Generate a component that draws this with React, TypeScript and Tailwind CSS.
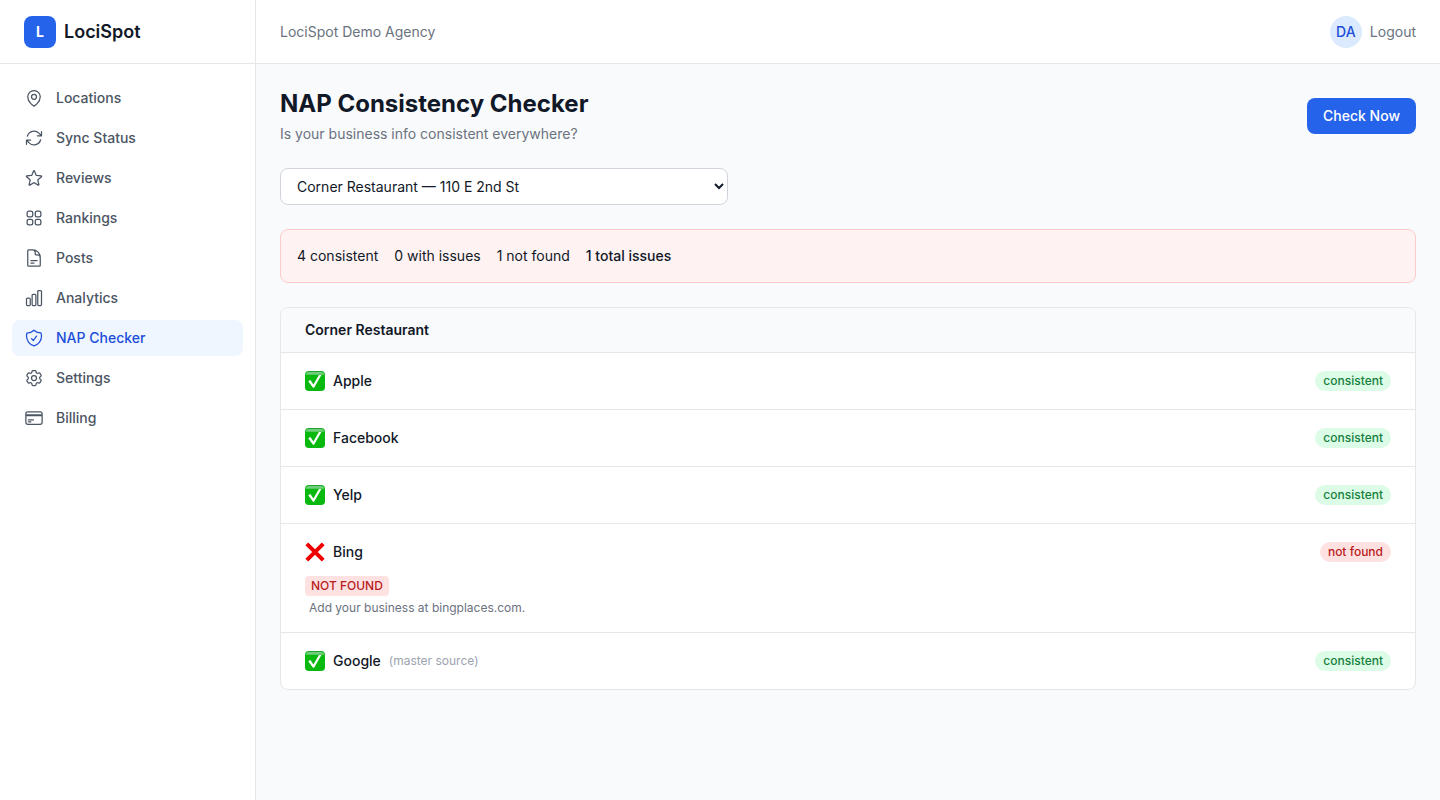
import { useState } from "react";
import type { IconType } from "react-icons";
import {
  HiOutlineArrowPath,
  HiOutlineChartBar,
  HiOutlineCog6Tooth,
  HiOutlineCreditCard,
  HiOutlineDocumentText,
  HiOutlineMapPin,
  HiOutlineShieldCheck,
  HiOutlineSquares2X2,
  HiOutlineStar,
} from "react-icons/hi2";

const navItems: { label: string; icon: IconType; active?: boolean }[] = [
  { label: "Locations", icon: HiOutlineMapPin },
  { label: "Sync Status", icon: HiOutlineArrowPath },
  { label: "Reviews", icon: HiOutlineStar },
  { label: "Rankings", icon: HiOutlineSquares2X2 },
  { label: "Posts", icon: HiOutlineDocumentText },
  { label: "Analytics", icon: HiOutlineChartBar },
  { label: "NAP Checker", icon: HiOutlineShieldCheck, active: true },
  { label: "Settings", icon: HiOutlineCog6Tooth },
  { label: "Billing", icon: HiOutlineCreditCard },
];

type Platform = {
  name: string;
  status: "consistent" | "not found";
  note?: string;
  issue?: { label: string; hint: string };
};

const platforms: Platform[] = [
  { name: "Apple", status: "consistent" },
  { name: "Facebook", status: "consistent" },
  { name: "Yelp", status: "consistent" },
  {
    name: "Bing",
    status: "not found",
    issue: { label: "NOT FOUND", hint: "Add your business at bingplaces.com." },
  },
  { name: "Google", status: "consistent", note: "(master source)" },
];

function CheckMark() {
  return (
    <svg viewBox="0 0 20 20" className="size-5 shrink-0" aria-hidden="true">
      <rect width="20" height="20" rx="3.8" fill="#0ab90f" />
      <path d="M.8 3.8Q.8.9 3.8.9h12.4q3 0 3 2.9z" fill="#6fce7c" />
      <path d="M3.4.5h13.2" stroke="#2f9a45" strokeWidth="1" strokeDasharray="1.2 .5" />
      <path d="M3.2 10.2 5.4 9l3 4.4L13.9 4h2.5L9.1 16.8H8z" fill="#fff" />
    </svg>
  );
}

function CrossMark() {
  return (
    <svg viewBox="0 0 20 20" className="size-5 shrink-0" aria-hidden="true">
      <path
        d="M1.8 1.8 18.2 18.2M18.2 1.8 1.8 18.2"
        stroke="#ee0000"
        strokeWidth="4"
      />
    </svg>
  );
}

function Sidebar() {
  return (
    <aside className="flex w-64 shrink-0 flex-col border-r border-[#e5e7eb] bg-white">
      <div className="flex h-16 items-center gap-2 border-b border-[#e5e7eb] px-6">
        <div className="flex size-8 items-center justify-center rounded-lg bg-[#2563eb] text-sm font-bold text-white">
          L
        </div>
        <span className="text-lg font-semibold">LociSpot</span>
      </div>
      <nav className="flex flex-col gap-1 px-3 py-4">
        {navItems.map(({ label, icon: Icon, active }) => (
          <a
            key={label}
            href="#"
            aria-current={active ? "page" : undefined}
            className={
              active
                ? "flex items-center gap-3 rounded-lg bg-[#eff6ff] px-3 py-2 text-sm font-medium text-[#1d4ed8]"
                : "flex items-center gap-3 rounded-lg px-3 py-2 text-sm font-medium text-[#4b5563]"
            }
          >
            <Icon className="size-5 shrink-0" aria-hidden="true" />
            {label}
          </a>
        ))}
      </nav>
    </aside>
  );
}

function PlatformRow({ name, status, note, issue }: Platform) {
  const ok = status === "consistent";
  return (
    <li className="px-6 py-4">
      <div className="flex h-6 items-center justify-between">
        <div className="flex items-center gap-2">
          {ok ? <CheckMark /> : <CrossMark />}
          <span className="text-sm font-medium">{name}</span>
          {note && <span className="text-xs text-[#9ca3af]">{note}</span>}
        </div>
        <span
          className={
            ok
              ? "rounded-full bg-[#dcfce7] px-2 py-0.5 text-xs font-medium text-[#15803d]"
              : "rounded-full bg-[#fee2e2] px-2 py-0.5 text-xs font-medium text-[#b91c1c]"
          }
        >
          {status}
        </span>
      </div>
      {issue && (
        <div className="mt-3 flex flex-col items-start gap-1 text-xs">
          <span className="rounded bg-[#fee2e2] px-1.5 py-0.5 font-medium text-[#b91c1c]">
            {issue.label}
          </span>
          <p className="ml-1 text-[#6b7280]">{issue.hint}</p>
        </div>
      )}
    </li>
  );
}

export default function App() {
  const [location, setLocation] = useState("corner");

  return (
    <div className="flex min-h-screen bg-[#f9fafb] font-['Inter',sans-serif] text-[#111827]">
      <Sidebar />
      <div className="flex min-w-0 flex-1 flex-col">
        <header className="flex h-16 items-center justify-between border-b border-[#e5e7eb] bg-white px-6 text-sm text-[#6b7280]">
          <span>LociSpot Demo Agency</span>
          <div className="flex items-center gap-2">
            <div className="flex size-8 items-center justify-center rounded-full bg-[#dbeafe] font-medium text-[#1d4ed8]">
              DA
            </div>
            <button type="button">Logout</button>
          </div>
        </header>
        <main className="flex flex-col gap-6 p-6">
          <div className="flex items-center justify-between">
            <div>
              <h1 className="text-2xl font-bold">NAP Consistency Checker</h1>
              <p className="mt-1 text-sm text-[#6b7280]">Is your business info consistent everywhere?</p>
            </div>
            <button
              type="button"
              className="rounded-lg bg-[#2563eb] px-4 py-2 text-sm font-medium text-white"
            >
              Check Now
            </button>
          </div>
          <select
            aria-label="Location"
            value={location}
            onChange={(event) => setLocation(event.target.value)}
            className="w-full max-w-md rounded-lg border border-[#d1d5db] bg-white px-3 py-2 text-sm"
          >
            <option value="corner">Corner Restaurant — 110 E 2nd St</option>
          </select>
          <div className="flex gap-4 rounded-lg border border-[#fecaca] bg-[#fef2f2] p-4 text-sm">
            <span>4 consistent</span>
            <span>0 with issues</span>
            <span>1 not found</span>
            <span className="font-medium">1 total issues</span>
          </div>
          <section className="overflow-hidden rounded-lg border border-[#e5e7eb] bg-white">
            <h2 className="border-b border-[#e5e7eb] bg-[#f9fafb] px-6 py-3 text-sm font-semibold">
              Corner Restaurant
            </h2>
            <ul className="divide-y divide-[#e5e7eb]">
              {platforms.map((platform) => (
                <PlatformRow key={platform.name} {...platform} />
              ))}
            </ul>
          </section>
        </main>
      </div>
    </div>
  );
}
